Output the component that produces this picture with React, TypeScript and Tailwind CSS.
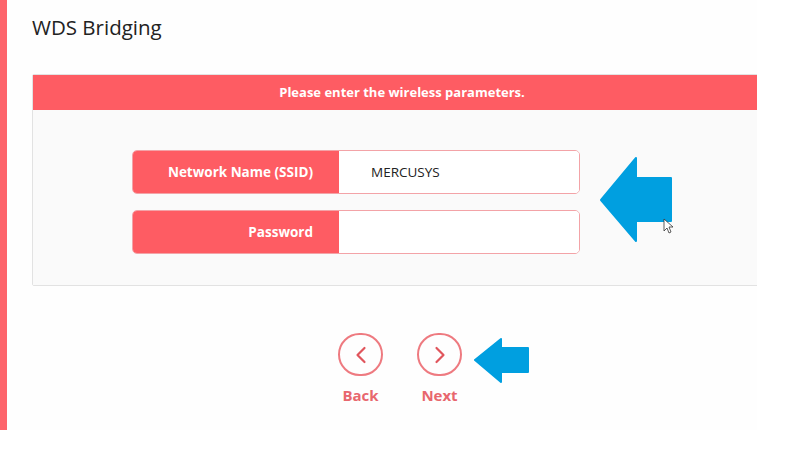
import React from "react";

const font = { fontFamily: '"Open Sans", "Noto Sans", Arial, sans-serif' };

function Field({ label, value }: { label: string; value?: string }) {
  return (
    <div className="flex h-[44px] w-[448px] rounded-[5px] border border-[#f3a3a7] overflow-hidden">
      <div className="w-[206px] bg-[#fe5c63] flex items-center justify-end pr-[26px] text-white text-[13.5px] font-bold">
        {label}
      </div>
      <div className="flex-1 bg-white flex items-center pl-[32px] text-[13.5px] text-[#222]">
        {value}
      </div>
    </div>
  );
}

function CircleBtn({ dir, label }: { dir: "left" | "right"; label: string }) {
  return (
    <div className="flex flex-col items-center w-[45px]">
      <div className="w-[45px] h-[43px] rounded-full border-2 border-[#ee7a80] flex items-center justify-center">
        <svg width="16" height="22" viewBox="0 0 16 22">
          {dir === "left" ? (
            <path d="M11.5 4 L4.5 11 L11.5 18" fill="none" stroke="#e0555c" strokeWidth="2.2" strokeLinecap="round" strokeLinejoin="round" />
          ) : (
            <path d="M4.5 4 L11.5 11 L4.5 18" fill="none" stroke="#e0555c" strokeWidth="2.2" strokeLinecap="round" strokeLinejoin="round" />
          )}
        </svg>
      </div>
      <div className="mt-[8px] text-[15px] font-bold text-[#e8676e]">{label}</div>
    </div>
  );
}

export default function App() {
  return (
    <div className="relative w-[795px] h-[452px] bg-white overflow-hidden" style={font}>
      <div className="flex h-[430px] w-[757px]">
        <div className="w-[7px] bg-[#fd646b]" />
        <div className="flex-1 bg-[#fefefe] overflow-hidden">
          <div className="pl-[25px] pt-[13px] text-[20.5px] text-[#222] leading-[28px]">WDS Bridging</div>
          <div className="ml-[25px] mt-[33px] w-[740px] border border-[#e2e2e2] rounded-[2px]">
            <div className="h-[35px] bg-[#fe5c63] flex items-center justify-center text-white text-[13px] font-bold">
              Please enter the wireless parameters.
            </div>
            <div className="bg-[#fafafa] pt-[40px] pb-[31px] pl-[99px] flex flex-col gap-[16px]">
              <Field label="Network Name (SSID)" value="MERCUSYS" />
              <Field label="Password" />
            </div>
          </div>
          <div className="flex gap-[34px] mt-[47px] pl-[331px]">
            <CircleBtn dir="left" label="Back" />
            <CircleBtn dir="right" label="Next" />
          </div>
        </div>
      </div>

      {/* annotation arrows */}
      <svg className="absolute left-0 top-0" width="795" height="452" viewBox="0 0 795 452">
        <path d="M601 200 L636 158 L636 178 L671 178 L671 221 L636 221 L636 241 Z" fill="#009fe0" strokeLinejoin="round" stroke="#009fe0" strokeWidth="2" />
        <path d="M475 360 L501 339 L501 348 L528 348 L528 372 L501 372 L501 382 Z" fill="#009fe0" strokeLinejoin="round" stroke="#009fe0" strokeWidth="2" />
        <path d="M664 219 L664 231 L667 228 L669 233 L671 232 L669 227 L673 227 Z" fill="#fff" stroke="#333" strokeWidth="0.8" />
      </svg>
    </div>
  );
}
